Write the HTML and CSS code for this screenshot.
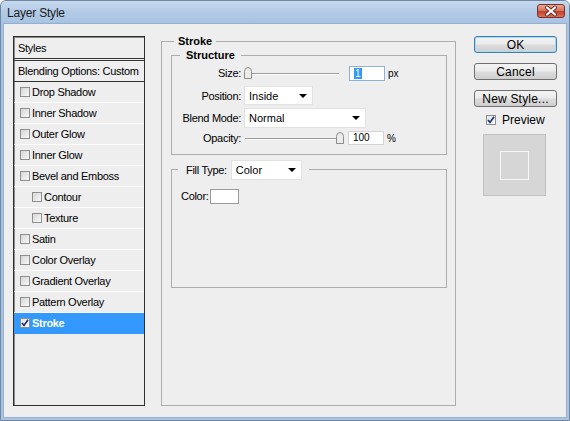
FILE: index.html
```html
<!DOCTYPE html>
<html lang="en">
<head>
    <meta charset="UTF-8">
    <meta name="viewport" content="width=device-width, initial-scale=1.0">
    <title>Layer Style</title>
    <link rel="stylesheet" href="styles.css">
</head>
<body>

<div class="window">
    <div class="titlebar">
        <span class="title">Layer Style</span>
        <span class="close">
            <svg width="28" height="14" viewBox="0 0 28 14">
                <path d="M10 3.5 L18 10.5 M18 3.5 L10 10.5" stroke="#6b2a1e" stroke-width="4" stroke-linecap="round"/>
                <path d="M10 3.5 L18 10.5 M18 3.5 L10 10.5" stroke="#fff" stroke-width="2.2" stroke-linecap="round"/>
            </svg>
        </span>
    </div>

    <div class="content">
        <!-- Styles list on the left -->
        <div class="styles-list">
            <div class="row head">Styles</div>
            <div class="row blending">Blending Options: Custom</div>
            <div class="row"><span class="check"></span>Drop Shadow</div>
            <div class="row"><span class="check"></span>Inner Shadow</div>
            <div class="row"><span class="check"></span>Outer Glow</div>
            <div class="row"><span class="check"></span>Inner Glow</div>
            <div class="row"><span class="check"></span>Bevel and Emboss</div>
            <div class="row sub"><span class="check"></span>Contour</div>
            <div class="row sub"><span class="check"></span>Texture</div>
            <div class="row"><span class="check"></span>Satin</div>
            <div class="row"><span class="check"></span>Color Overlay</div>
            <div class="row"><span class="check"></span>Gradient Overlay</div>
            <div class="row"><span class="check"></span>Pattern Overlay</div>
            <div class="row active">
                <span class="check on"><svg width="8" height="8" viewBox="0 0 8 8"><path d="M1 4 L3 6.5 L7 0.8" fill="none" stroke="#1c2f6e" stroke-width="1.6"/></svg></span>Stroke
            </div>
        </div>

        <!-- Stroke settings -->
        <fieldset class="group stroke">
            <legend>Stroke</legend>

            <fieldset class="group structure">
                <legend>Structure</legend>

                <div class="field f-size">
                    <label>Size:</label>
                    <svg class="slider" width="100" height="12" viewBox="0 0 100 12">
                        <line x1="2" y1="6.5" x2="95" y2="6.5" stroke="#9d9d9d"/>
                        <line x1="2" y1="7.5" x2="95" y2="7.5" stroke="#fff"/>
                        <path d="M0.5 11.5 V4.5 Q0.5 0.5 4 0.5 Q7.5 0.5 7.5 4.5 V11.5 Z" fill="#ececec" stroke="#8c8c8c"/>
                    </svg>
                    <span class="num focus"><span class="sel">1</span></span>
                    <span class="unit">px</span>
                </div>

                <div class="field f-position">
                    <label>Position:</label>
                    <span class="select w-position">Inside<i class="arrow"></i></span>
                </div>

                <div class="field f-blend">
                    <label>Blend Mode:</label>
                    <span class="select w-blend">Normal<i class="arrow"></i></span>
                </div>

                <div class="field f-opacity">
                    <label>Opacity:</label>
                    <svg class="slider" width="100" height="12" viewBox="0 0 100 12">
                        <line x1="1" y1="6.5" x2="93" y2="6.5" stroke="#9d9d9d"/>
                        <line x1="1" y1="7.5" x2="93" y2="7.5" stroke="#fff"/>
                        <path d="M92.5 11.5 V4.5 Q92.5 0.5 96 0.5 Q99.5 0.5 99.5 4.5 V11.5 Z" fill="#ececec" stroke="#8c8c8c"/>
                    </svg>
                    <span class="num">100</span>
                    <span class="unit">%</span>
                </div>
            </fieldset>

            <fieldset class="group fill">
                <legend>
                    <span class="fill-label">Fill Type:</span>
                    <span class="select w-fill">Color<i class="arrow"></i></span>
                </legend>
                <div class="fill-body">
                    <label>Color:</label>
                    <span class="swatch"></span>
                </div>
            </fieldset>
        </fieldset>

        <!-- Buttons and preview -->
        <div class="actions">
            <button class="btn default">OK</button>
            <button class="btn">Cancel</button>
            <button class="btn">New Style...</button>
            <div class="preview-check">
                <span class="check on"><svg width="8" height="8" viewBox="0 0 8 8"><path d="M1 4 L3 6.5 L7 0.8" fill="none" stroke="#1c2f6e" stroke-width="1.6"/></svg></span>Preview
            </div>
            <div class="preview-box"><div class="preview-square"></div></div>
        </div>
    </div>
</div>

</body>
</html>
```

FILE: styles.css
```css
body { margin: 0; font-family: "Liberation Sans", Arial, sans-serif; font-size: 11px; color: #000; }

/* Window frame */
.window { width: 570px; height: 421px; box-sizing: border-box; padding: 0 2px 2px 2px; border: 1px solid #6f87a3; border-radius: 6px 6px 0 0; background: #aac5e4; }
.titlebar { height: 22px; display: flex; justify-content: space-between; align-items: flex-start; background: linear-gradient(#c8daef, #b4cbe7 45%, #a8c3e2); margin: 0 -2px; padding: 0 2px; border-radius: 5px 5px 0 0; }
.title { font-size: 12px; letter-spacing: -0.2px; margin: 5px 0 0 4px; color: #1b1b1b; }
.close { width: 28px; height: 14px; margin: 3px 2px 0 0; border: 1px solid #7a3426; border-radius: 3px; background: linear-gradient(#e8a898, #d47663 45%, #c4402a 55%, #d9705a); box-sizing: border-box; display: flex; }
.close svg { margin: -1px; }

/* Main area */
.content { height: 395px; box-sizing: border-box; background: #eeeeee; border: 1px solid #95afcc; display: flex; align-items: flex-start; padding: 12px 0 0 9px; }

/* Styles list */
.styles-list { width: 132px; height: 370px; box-sizing: border-box; border: 1px solid #2e2e2e; box-shadow: inset 1px 1px 0 #8a8a8a; margin-right: 16px; letter-spacing: -0.3px; }
.row { height: 20px; border-bottom: 1px solid #fbfbfb; display: flex; align-items: center; padding-left: 6px; }
.row.head { height: 21px; padding-left: 4px; border-bottom: 3px double #333; }
.row.blending { padding-left: 4px; border-bottom: 1px solid #333; }
.row.sub { padding-left: 18px; }
.row.active { background: #3399ff; color: #fff; font-weight: bold; border-bottom-color: #3399ff; }
.check { width: 10px; height: 10px; box-sizing: border-box; border: 1px solid #8e8f8f; background: linear-gradient(135deg, #d6d6d6, #f8f8f8); margin-right: 2px; display: inline-flex; align-items: center; justify-content: center; flex: none; }
.check.on { background: linear-gradient(135deg, #dfe5ee, #fafafa); }

/* Group boxes */
.group { margin: 0; padding: 0; border: 1px solid #adadad; min-width: 0; box-sizing: border-box; }
.group legend { padding: 0 4px; line-height: 14px; font-weight: bold; }
.stroke { width: 295px; height: 372px; margin: -2px 18px 0 0; }
.stroke > legend { margin-left: 12px; }
.structure { margin: 0 8px 0 9px; padding-bottom: 7px; }
.structure > legend { margin-left: 8px; padding: 0 6px; }

/* Structure rows */
.field { display: flex; align-items: center; }
.field label { width: 69px; text-align: right; margin-right: 3px; letter-spacing: -0.3px; }
.f-size { height: 22px; }
.f-position { height: 23px; }
.f-blend { height: 22px; }
.f-opacity { height: 18px; }
.slider { display: block; }
.num { width: 36px; height: 15px; box-sizing: border-box; background: #fff; border: 1px solid #d4d4d4; padding-left: 4px; margin-left: 4px; font-size: 10px; line-height: 13px; }
.f-size .num { margin-left: 5px; }
.num.focus { border-color: #8fb2d8; }
.sel { background: #3399ff; color: #fff; padding: 0 1px; }
.f-opacity .num { height: 14px; line-height: 12px; }
.unit { margin-left: 3px; font-size: 10px; }

/* Drop-down boxes */
.select { position: relative; height: 20px; box-sizing: border-box; background: #fff; border: 1px solid #e2e2e2; display: flex; align-items: center; padding-left: 4px; font-weight: normal; }
.arrow { position: absolute; right: 5px; top: 7px; width: 0; height: 0; border-left: 4px solid transparent; border-right: 4px solid transparent; border-top: 4px solid #000; }
.w-position { width: 69px; height: 19px; }
.w-blend { width: 122px; }
.w-fill { width: 71px; }

/* Fill type */
.fill { margin: 3px 8px 0 9px; }
.fill > legend { margin-left: 6px; padding: 2px 7px 0 8px; display: flex; align-items: center; font-weight: normal; }
.fill-label { margin-right: 4px; letter-spacing: -0.3px; }
.fill-body { height: 98px; padding: 9px 0 0 9px; display: flex; align-items: flex-start; }
.fill-body label { line-height: 15px; margin-right: 1px; letter-spacing: -0.3px; }
.swatch { width: 29px; height: 15px; box-sizing: border-box; background: #fff; border: 1px solid #9b9b9b; }

/* Buttons and preview */
.actions { width: 83px; display: flex; flex-direction: column; }
.btn { width: 83px; height: 17px; margin: 0 0 10px 0; padding: 0; font-family: "Liberation Sans", Arial, sans-serif; font-size: 12px; letter-spacing: 0.2px; color: #000; border: 1px solid #707070; border-radius: 3px; background: linear-gradient(#f3f3f3, #ebebeb 45%, #dcdcdc 55%, #cfcfcf); line-height: 14px; }
.btn.default { border-color: #3c7fb1; box-shadow: inset 0 0 0 1px #a8dbf3; }
.preview-check { display: flex; align-items: center; margin: -2px 0 0 12px; height: 10px; font-size: 12px; }
.preview-check .check { margin-right: 6px; }
.preview-box { width: 63px; height: 62px; box-sizing: border-box; margin: 9px 0 0 9px; background: #d6d6d6; border: 1px solid #c2c2c2; display: flex; align-items: center; justify-content: center; }
.preview-square { width: 29px; height: 29px; box-sizing: border-box; border: 1px solid #f7f7f7; }
```
